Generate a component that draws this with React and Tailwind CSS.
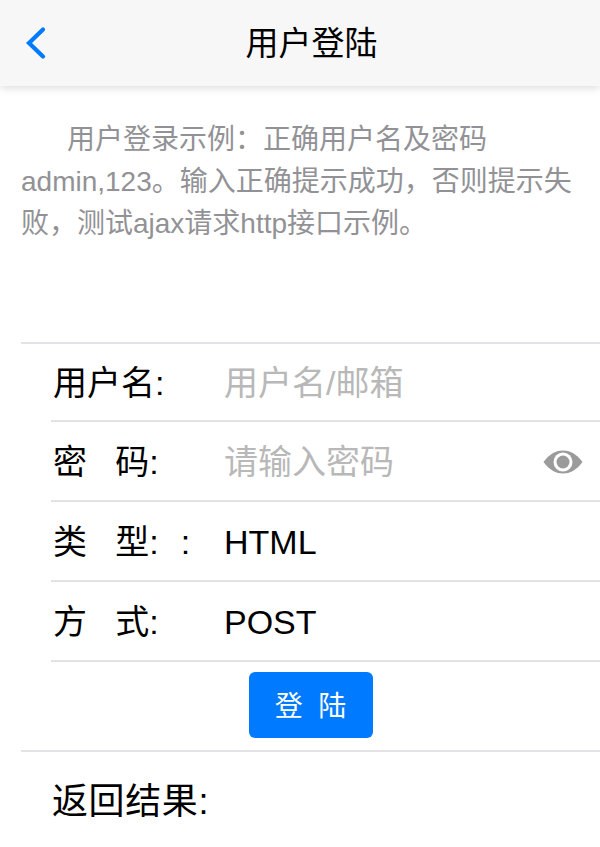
import React from "react";

function Row({ label, children, height = "h-[80px]" }) {
  return (
    <div className={`ml-[30px] flex ${height} items-center border-b-2 border-[#e3e3e5] pl-[2px] pt-[2px]`}>
      <div className="w-[171px] shrink-0 whitespace-pre text-[34px] text-black">{label}</div>
      {children}
    </div>
  );
}

export default function App() {
  return (
    <div className="h-[847px] w-[600px] overflow-hidden bg-white font-['Liberation_Sans','Noto_Sans_CJK_SC',sans-serif]">
      <header className="relative flex h-[86px] items-center justify-center bg-[#f7f7f7] pl-[23px] pt-[2px] shadow-[0_2px_8px_rgba(0,0,0,0.14)]">
        <svg className="absolute left-[24px] top-[26px] h-[34px] w-[24px]" viewBox="0 0 24 34" fill="none">
          <path d="M19 3.5 L5 17 L19 30.5" stroke="#007aff" strokeWidth="4.2" strokeLinecap="round" strokeLinejoin="miter" />
        </svg>
        <h1 className="text-[33px] font-normal text-black">用户登陆</h1>
      </header>

      <p className="mt-[33px] h-[126px] px-[21px] text-[28px] leading-[42px] text-[#929296] [text-indent:46px]">
        {"用户登录示例\uFF1A正确用户名及密码admin,123。输入正确提示成功\uFF0C否则提示失败\uFF0C测试ajax请求http接口示例。"}
      </p>

      <section className="ml-[21px] mt-[97px] border-y-2 border-[#e3e3e5]">
        <Row label="用户名:" height="h-[78px]">
          <input
            className="w-[300px] bg-transparent text-[34px] outline-none placeholder:text-[#b8b8b8]"
            placeholder="用户名/邮箱"
            readOnly
          />
        </Row>
        <Row label="密   码:">
          <input
            className="w-[300px] bg-transparent text-[34px] outline-none placeholder:text-[#b8b8b8]"
            placeholder="请输入密码"
            readOnly
          />
          <svg className="ml-auto mr-[17px] h-[24px] w-[40px] shrink-0" viewBox="0 0 40 24">
            <path d="M0.5 12 C7 3.5 13 0.5 20 0.5 C27 0.5 33 3.5 39.5 12 C33 20.5 27 23.5 20 23.5 C13 23.5 7 20.5 0.5 12 Z" fill="#9b9b9b" />
            <circle cx="20" cy="12" r="9.5" fill="#ffffff" />
            <circle cx="20" cy="12" r="6.5" fill="#9b9b9b" />
          </svg>
        </Row>
        <Row label={<>类   型:<span className="ml-[22px]">:</span></>}>
          <span className="text-[34px] text-black">HTML</span>
        </Row>
        <Row label="方   式:">
          <span className="text-[34px] text-black">POST</span>
        </Row>
        <div className="flex h-[88px] items-start justify-center pt-[10px]">
          <button className="flex h-[66px] w-[124px] items-center justify-center whitespace-pre rounded-[6px] bg-[#007aff] pt-[3px] text-[28px] text-white">
            登  陆
          </button>
        </div>
      </section>

      <div className="ml-[52px] mt-[25px] text-[36px] leading-[50px] tracking-[0.6px] text-black">返回结果:</div>
    </div>
  );
}
